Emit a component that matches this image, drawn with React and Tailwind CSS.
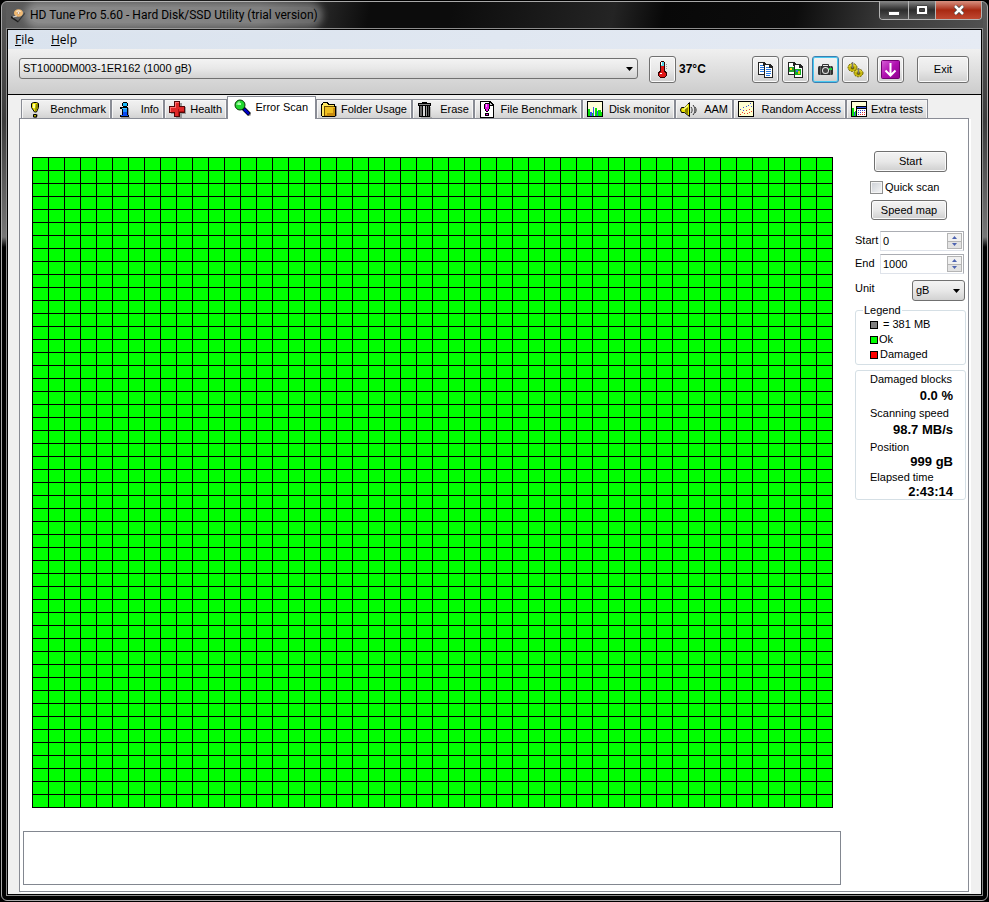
import { useState } from 'react';
import clsx from 'clsx';

const BenchmarkIcon = () => (
    <svg viewBox="1 0 17 17" className="w-[17px] h-[17px] shrink-0" aria-hidden="true">
        <path d="M8 17h4v-1l1-1v-1l-1-1v2z" fill="#888" />
        <path d="M6.500 2.500 8.500 1.500h3l2 1v4l-2 4.500h-2l-3-4.500z" fill="#e8e000" stroke="#000" />
        <path d="M8 3h2v4H8z" fill="#ffffa0" />
        <path d="M11 3h2v4l-2 3h-1z" fill="#908c00" />
        <path d="M8.500 13.500h3v2.500h-3z" fill="#b8b000" stroke="#000" />
    </svg>
);

const InfoIcon = () => (
    <svg viewBox="1 0 17 17" className="w-[17px] h-[17px] shrink-0" shapeRendering="crispEdges" aria-hidden="true">
        <path d="M6 16h9v1H6zM13 7h1v8h-1z" fill="#999" />
        <path d="M8 1h4v1h1v3h-1v1H8V5H7V2h1zM5 6h8v8h1v2H5v-2h2V8H5z" fill="#000" />
        <path d="M8 2h4v3H8z" fill="#18b8f8" />
        <path d="M6 7h6v1H8z" fill="#40c0ff" />
        <path d="M8 8h4v3H8z" fill="#1890ff" />
        <path d="M8 11h4v3h1v1H6v-1h2z" fill="#0848f0" />
    </svg>
);

const HealthIcon = () => (
    <svg viewBox="1 1 17 17" className="w-[17px] h-[17px] shrink-0" shapeRendering="crispEdges" aria-hidden="true">
        <path d="M8 3h6v4h4v7h-4v4H8v-4H3V8h5z" fill="#999" />
        <path d="M6 1h6v5h5v7h-5v4H6v-4H1V6h5z" fill="#500808" />
        <path d="M7 2h4v5h5v5h-5v4H7v-4H2V7h5z" fill="#e02828" />
        <path d="M7 2h4v1H8v5H3v4H2V7h5z" fill="#ff7070" />
        <path d="M10 9v7h1v-4h5v-1h-5V9z" fill="#b01010" />
    </svg>
);

const ScanIcon = () => (
    <svg viewBox="0 0 17 17" className="w-[17px] h-[17px] shrink-0" aria-hidden="true">
        <path d="m10.500 10.500 6 6" stroke="#aaa" strokeWidth="3" />
        <path d="m9 9 6.500 6.500" stroke="#000" strokeWidth="4" />
        <path d="m10 10 5 5" stroke="#0000c8" strokeWidth="2.500" />
        <circle cx="6" cy="6" r="5" fill="#20d830" stroke="#063806" />
        <path d="M3 6c0-2 1-3 3-3" fill="none" stroke="#b8ffb8" />
        <path d="M4 4h3v2H4z" fill="#a8ffa8" />
    </svg>
);

const FolderIcon = () => (
    <svg viewBox="1 1 17 17" className="w-[17px] h-[17px] shrink-0" shapeRendering="crispEdges" aria-hidden="true">
        <path d="M4 17h12v-1h1V6h-1v10H4z" fill="#888" />
        <path d="M3 2h5v1h1v1h6v2h1v10h-1v1H2v-1H1V4h1V3h1z" fill="#000" />
        <path d="M3 3h4v1h1v1h6v1H4v10H2V5h1z" fill="#ffe860" />
        <path d="M5 7h10v8H5z" fill="#f0c020" />
        <path d="M7 13h6V8h2v8H5v-1h2z" fill="#c88c10" />
        <path d="M5 6h9v1H5v9H4V6z" fill="#705000" />
    </svg>
);

const TrashIcon = () => (
    <svg viewBox="1 0 17 17" className="w-[17px] h-[17px] shrink-0" shapeRendering="crispEdges" aria-hidden="true">
        <path d="M14 6h1v10h1v1H5v-1h9z" fill="#aaa" />
        <path d="M6 1h5v1h4v3h-1v11H3V5H2V2h4z" fill="#000" />
        <path d="M3 3h11v1H3z" fill="#888" />
        <path d="M4 5h2v10H4z" fill="#666" />
        <path d="M7 5h2v10H7z" fill="#d8d8d8" />
        <path d="M10 5h1v10h-1z" fill="#999" />
        <path d="M12 5h1v10h-1z" fill="#555" />
    </svg>
);

const FileBenchmarkIcon = () => (
    <svg viewBox="1 1 17 17" className="w-[17px] h-[17px] shrink-0" shapeRendering="crispEdges" aria-hidden="true">
        <path d="M2 1h10l4 4v13H2z" fill="#000" />
        <path d="M3 2h8v4h4v11H3z" fill="#fff" />
        <path d="M12 3v2h2z" fill="#ccc" />
        <path d="M7 3h4v1h1v5h-1v2h-1v1H8v-1H7V9H6V4h1z" fill="#000" />
        <path d="M7 4h4v5h-1v2H8V9H7z" fill="#e010e0" />
        <path d="M8 4h1v3H8z" fill="#ffa0ff" />
        <path d="M7 13h4v3H7z" fill="#000" />
        <path d="M8 14h2v1H8z" fill="#e010e0" />
    </svg>
);

const MonitorIcon = () => (
    <svg viewBox="1 1 17 17" className="w-[17px] h-[17px] shrink-0" shapeRendering="crispEdges" aria-hidden="true">
        <path d="M1 1h16v16H1z" fill="#000" />
        <path d="M2 2h14v14H2z" fill="#ffffd8" />
        <path d="M2 9h2v3h2v1h1v3H2zM9 8h2v8H9zM12 10h3v2h1v4h-4z" fill="#08e008" />
        <path d="M4 12h2v4H4zM7 7h1v9H7zM11 11h1v5h-1z" fill="#3858f0" />
    </svg>
);

const SpeakerIcon = () => (
    <svg viewBox="1 0 17 17" className="w-[17px] h-[17px] shrink-0" aria-hidden="true">
        <path d="M2.500 6.500h3l5-5v14l-5-4h-3L1.500 9z" fill="#e8e000" stroke="#000" />
        <path d="M6 7h1V5l2-1v10l-3-3z" fill="#888400" />
        <path d="M3 8h2V7l4-4v3L5 9z" fill="#ffff70" />
        <path d="M12 6c1.500 2 1.500 4 0 6M14 4c2.500 3 2.500 7 0 10M16 6c1.500 2 1.500 4 0 6" fill="none" stroke="#333" />
    </svg>
);

const RandomIcon = () => (
    <svg viewBox="1 1 17 17" className="w-[17px] h-[17px] shrink-0" shapeRendering="crispEdges" aria-hidden="true">
        <path d="M1 1h16v16H1z" fill="#000" />
        <path d="M2 2h14v14H2z" fill="#ffffd0" />
        <path d="M3 9h1v1H3zM6 7h1v1H6zM6 10h1v1H6zM9 6h1v1H9zM11 5h1v1h-1zM13 3h1v1h-1zM14 6h1v1h-1z" fill="#4050e0" />
        <path d="M3 14h1v1H3zM5 12h1v1H5zM7 13h1v1H7zM9 10h1v1H9zM10 13h1v1h-1zM12 9h1v1h-1zM12 12h1v1h-1zM14 11h1v1h-1z" fill="#f04030" />
    </svg>
);

const ExtraIcon = () => (
    <svg viewBox="1 1 17 17" className="w-[17px] h-[17px] shrink-0" shapeRendering="crispEdges" aria-hidden="true">
        <path d="M1 1h16v16H1z" fill="#000" />
        <path d="M2 2h14v4H2zM2 6h4v10H2z" fill="#ffffd8" />
        <path d="M2 8h2v8H2zM5 11h1v5H5z" fill="#08e008" />
        <path d="M4 12h1v4H4z" fill="#3858f0" />
        <path d="M7 7h9v1H7z" fill="#3858f0" />
        <path d="M7 9h9v7H7z" fill="#fff" />
        <path d="M8 10h1v1H8zM10 10h1v1h-1zM12 10h1v1h-1zM14 10h1v1h-1zM8 12h1v1H8zM10 12h1v1h-1zM8 14h1v1H8z" fill="#3848d0" />
        <path d="M12 12h1v1h-1zM14 12h1v1h-1zM10 14h1v1h-1zM12 14h1v1h-1zM14 14h1v1h-1z" fill="#e03030" />
    </svg>
);

const DiskLogo = () => (
    <svg viewBox="0 0 16 16" className="w-4 h-4 shrink-0" aria-hidden="true">
        <path d="M1 9 8 1l7 4-7 9z" fill="#606060" />
        <path d="m1 9 7 5v1.500L1 11z" fill="#1c1c1c" />
        <path d="m8 14 7-9v2l-7 8.500z" fill="#2e2e2e" />
        <ellipse cx="8.500" cy="6" rx="4.500" ry="3.800" fill="#f0b870" />
        <path d="M6 4.500c1-1.500 4-2 5 0L8.500 6z" fill="#ffe9c8" />
        <circle cx="8.500" cy="6" r="1.200" fill="#fff" stroke="#a07040" strokeWidth=".5" />
        <path d="m3 10 4-1" stroke="#ddd" />
    </svg>
);

const ThermometerIcon = () => (
    <svg viewBox="0 0 17 17" className="w-[17px] h-[17px]" shapeRendering="crispEdges" aria-hidden="true">
        <path d="M7 0h3v1h1v9h1v1h1v4h-1v1h-1v1H6v-1H5v-1H4v-4h1v-1h1V1h1z" fill="#300" />
        <path d="M7 1h3v4H7z" fill="#50d8e8" />
        <path d="M7 5h3v6h1v1h1v3h-1v1H6v-1H5v-3h1v-1h1z" fill="#e01818" />
        <path d="M7 1h1v3H7zM6 12h2v1H6z" fill="#fff" />
        <path d="M12 3h1v1h-1zM12 5h1v1h-1zM12 7h1v1h-1z" fill="#999" />
    </svg>
);

const CopyIcon = ({ image }) => (
    <svg viewBox="0 0 17 17" className="w-[17px] h-[17px]" shapeRendering="crispEdges" aria-hidden="true">
        <path d="M1 1h6l3 3v10H1z" fill="#222" />
        <path d="M2 2h4v3h3v8H2z" fill="#fff" />
        {image ? <path d="M2 6h5v5H2z" fill="#28a030" /> : <path d="M3 4h3v1H3zM3 6h4v1H3zM3 8h4v1H3zM3 10h4v1H3z" fill="#2878e0" />}
        {image && <path d="M3 7h2v2H3z" fill="#ffe020" />}
        <path d="M7 3h6l3 3v11H7z" fill="#222" />
        <path d="M8 4h4v3h3v9H8z" fill="#fff" />
        {image ? <path d="M8 8h6v6H8z" fill="#10b020" /> : <path d="M9 6h3v1H9zM9 8h5v1H9zM9 10h5v1H9zM9 12h5v1H9zM9 14h4v1H9z" fill="#2878e0" />}
        {image && <path d="M9 9h2v2H9z" fill="#3868f0" />}
        {image && <path d="M11 10h2v3h-2z" fill="#e8c010" />}
    </svg>
);

const CameraIcon = () => (
    <svg viewBox="0 0 17 17" className="w-[17px] h-[17px]" aria-hidden="true">
        <path d="M5.500 5V3.500h6V5" fill="none" stroke="#333" />
        <rect x="1" y="5" width="15" height="9" rx="1.500" fill="#303030" />
        <path d="M3.500 5v9M13.500 5v9" stroke="#666" />
        <circle cx="8.500" cy="9.500" r="3.500" fill="#e4e4e4" />
        <circle cx="8.500" cy="9.500" r="2.500" fill="#444" />
        <path d="M12 7h3v2h-3z" fill="#18d838" />
    </svg>
);

const GearsIcon = () => (
    <svg viewBox="0 0 17 17" className="w-[17px] h-[17px]" aria-hidden="true">
        <ellipse cx="5.500" cy="6.500" rx="4.500" ry="4" fill="#c8b810" stroke="#6e6400" strokeDasharray="2 1" />
        <ellipse cx="11.500" cy="12" rx="4.500" ry="3.800" fill="#c8b810" stroke="#6e6400" strokeDasharray="2 1" />
        <path d="M2.500 5.500c1-2 4-2.500 6-.5M8.500 11c1-2 4-2.500 6-.5" fill="none" stroke="#f0e850" />
        <ellipse cx="5.500" cy="7" rx="1.800" ry="1.400" fill="#6e6400" />
        <ellipse cx="11.500" cy="12.500" rx="1.800" ry="1.400" fill="#6e6400" />
        <path d="M5.500 1v6M11.500 7v5.500" stroke="#777" strokeWidth="1.500" />
    </svg>
);

const DownloadIcon = () => (
    <svg viewBox="0 0 19 19" className="w-[19px] h-[19px]" aria-hidden="true">
        <defs>
            <linearGradient id="purple" x1="0" y1="0" x2="1" y2="1">
                <stop offset="0" stopColor="#d860d8" />
                <stop offset=".5" stopColor="#b010b0" />
                <stop offset="1" stopColor="#900090" />
            </linearGradient>
        </defs>
        <rect x=".5" y=".5" width="18" height="18" rx="1" fill="url(#purple)" stroke="#700070" />
        <path d="M9.500 3v12M4.500 10.500l5 5 5-5" fill="none" stroke="#fff" strokeWidth="2" />
    </svg>
);

const TABS = [
    { id: 'benchmark', label: 'Benchmark', icon: BenchmarkIcon, width: 'w-[90px]' },
    { id: 'info', label: 'Info', icon: InfoIcon, width: 'w-[53px]' },
    { id: 'health', label: 'Health', icon: HealthIcon, width: 'w-[63px]' },
    { id: 'scan', label: 'Error Scan', icon: ScanIcon, width: 'w-[89px]' },
    { id: 'folder', label: 'Folder Usage', icon: FolderIcon, width: 'w-[96px]' },
    { id: 'erase', label: 'Erase', icon: TrashIcon, width: 'w-[62px]' },
    { id: 'file', label: 'File Benchmark', icon: FileBenchmarkIcon, width: 'w-[108px]' },
    { id: 'monitor', label: 'Disk monitor', icon: MonitorIcon, width: 'w-[93px]' },
    { id: 'aam', label: 'AAM', icon: SpeakerIcon, width: 'w-[58px]' },
    { id: 'random', label: 'Random Access', icon: RandomIcon, width: 'w-[113px]' },
    { id: 'extra', label: 'Extra tests', icon: ExtraIcon, width: 'w-[82px]' },
];

const BLOCKS = Array.from({ length: 50 * 50 }, (_, i) => i);

const LEGEND = [
    { label: '= 381 MB', color: 'bg-[#808080]', gap: 'gap-[5px]' },
    { label: 'Ok', color: 'bg-[#00ff00]', gap: 'gap-px' },
    { label: 'Damaged', color: 'bg-[#ff0000]', gap: 'gap-[2px]' },
];

const STATS = [
    { label: 'Damaged blocks', value: '0.0 %', leading: 'leading-[18px]' },
    { label: 'Scanning speed', value: '98.7 MB/s', leading: 'leading-[18px]' },
    { label: 'Position', value: '999 gB', leading: 'leading-[14px]' },
    { label: 'Elapsed time', value: '2:43:14', leading: 'leading-[14px]' },
];

const buttonStyle = 'flex items-center justify-center rounded-[3px] border bg-linear-to-b from-[#f3f3f3] via-[#e8e8e8] to-[#cfcfcf]';
const buttonNormal = 'border-[#707070] shadow-[inset_0_0_0_1px_#fafafa]';
const buttonFocused = 'border-[#3c7fb1] shadow-[inset_0_0_0_1px_#48c8f0]';

const ToolButton = ({ label, focused, className, children }) => (
    <button
        aria-label={label}
        className={clsx(buttonStyle, focused ? buttonFocused : buttonNormal, 'w-[27px] h-[27px] shrink-0', className)}
    >
        {children}
    </button>
);

const Select = ({ label, options, className }) => (
    <div className={clsx('relative', className)}>
        <select
            aria-label={label}
            className="appearance-none w-full h-[21px] pl-[3px] pr-4 rounded-[3px] border border-[#707070] bg-linear-to-b from-[#f3f3f3] via-[#e8e8e8] to-[#d2d2d2] text-black"
        >
            {options.map(option => <option key={option}>{option}</option>)}
        </select>
        <svg viewBox="0 0 7 4" className="absolute right-[5px] top-[9px] w-[7px] h-1 pointer-events-none" aria-hidden="true">
            <path d="M0 0h7L3.500 4z" fill="#000" />
        </svg>
    </div>
);

const SpinInput = ({ id, label, initial }) => {
    const [value, setValue] = useState(initial);

    return (
        <div className="flex">
            <label htmlFor={id} className="w-[25px] shrink-0 pt-[2px] leading-[14px]">{label}</label>
            <div className="flex flex-1 min-w-0 h-5 mr-0.5 border border-[#dfe3ea] border-t-[#abadb3] border-r-[#abadb3] bg-white">
                <input
                    id={id}
                    value={value}
                    onChange={e => setValue(Number(e.target.value) || 0)}
                    className="flex-1 min-w-0 pl-[2px] outline-none"
                />
                <div className="flex flex-col w-[17px] shrink-0 p-px">
                    <button aria-label={`Increase ${label}`} onClick={() => setValue(value + 1)} className="flex-1 flex items-center justify-center border border-[#b4b4b4] bg-[#f0f0f0]">
                        <svg viewBox="0 0 5 3" className="w-[5px] h-[3px]" aria-hidden="true"><path d="M0 3h5L2.500 0z" fill="#4d63b0" /></svg>
                    </button>
                    <button aria-label={`Decrease ${label}`} onClick={() => setValue(value - 1)} className="flex-1 flex items-center justify-center border border-t-0 border-[#b4b4b4] bg-[#e2e2e2]">
                        <svg viewBox="0 0 5 3" className="w-[5px] h-[3px]" aria-hidden="true"><path d="M0 0h5L2.500 3z" fill="#4d63b0" /></svg>
                    </button>
                </div>
            </div>
        </div>
    );
};

const TitleBar = () => (
    <header className="relative flex h-[26px] items-center pl-[4px] bg-[linear-gradient(100deg,#5c5c5c_0px,#4a4a4a_250px,#0c0c0c_360px,#0c0c0c_440px,#242424_600px,#080808_650px,#0c0c0c_780px,#3a3a3a_870px,#555_985px)]">
        <div className="flex items-center gap-[4px]">
            <DiskLogo />
            <h1 className="rounded-full bg-white/30 font-[Roboto,sans-serif] text-[12px] leading-4 text-black shadow-[0_0_7px_5px_rgba(255,255,255,0.3)]">
                HD Tune Pro 5.60 - Hard Disk/SSD Utility (trial version)
            </h1>
        </div>
        <div className="absolute right-px -top-px flex h-[19px] overflow-hidden rounded-b-[4px] border border-t-0 border-[#b4b4b4]">
            <button aria-label="Minimize" className="flex w-7 items-center justify-center bg-linear-to-b from-[#8a8a8a] via-[#2c2c2c] to-[#555]">
                <svg viewBox="0 0 12 5" className="w-3 h-[5px] mt-1.5" aria-hidden="true"><rect x=".5" y=".5" width="11" height="4" fill="#fff" stroke="#444" /></svg>
            </button>
            <button aria-label="Maximize" className="flex w-[27px] items-center justify-center border-l border-[#b4b4b4] bg-linear-to-b from-[#8a8a8a] via-[#2c2c2c] to-[#555]">
                <svg viewBox="0 0 12 10" className="w-3 h-2.5" aria-hidden="true">
                    <path d="M.5.5h11v9H.5z" fill="#fff" stroke="#444" />
                    <path d="M3.500 3.500h5v3h-5z" fill="#444" stroke="#333" />
                </svg>
            </button>
            <button aria-label="Close" className="flex w-[46px] items-center justify-center border-l border-[#b4b4b4] bg-linear-to-b from-[#d89080] via-[#a82810] to-[#c04830]">
                <svg viewBox="0 0 12 10" className="w-3 h-2.5" aria-hidden="true">
                    <path d="m2 1 8 8M10 1 2 9" stroke="#444" strokeWidth="4" />
                    <path d="m2 1 8 8M10 1 2 9" stroke="#fff" strokeWidth="2.500" />
                </svg>
            </button>
        </div>
    </header>
);

const Toolbar = () => (
    <div className="flex h-[46px] items-start border-b border-black bg-linear-to-b from-[#f0f0f0] to-[#cccccc] pl-[11px] pr-3 pt-[7px]">
        <Select label="Drive" options={['ST1000DM003-1ER162 (1000 gB)']} className="flex-1 mt-0.5" />
        <ToolButton label="Temperature" className="ml-[11px]"><ThermometerIcon /></ToolButton>
        <span className="w-[76px] pl-[3px] text-[12px] font-bold leading-[27px]">37°C</span>
        <div className="flex gap-[3px]">
            <ToolButton label="Copy text"><CopyIcon /></ToolButton>
            <ToolButton label="Copy screenshot"><CopyIcon image /></ToolButton>
            <ToolButton label="Save screenshot" focused><CameraIcon /></ToolButton>
            <ToolButton label="Options"><GearsIcon /></ToolButton>
        </div>
        <ToolButton label="Minimize to tray" className="ml-2"><DownloadIcon /></ToolButton>
        <button className={clsx(buttonStyle, buttonNormal, 'ml-[13px] w-[52px] h-[27px]')}>Exit</button>
    </div>
);

const TabBar = ({ active, onSelect }) => (
    <div role="tablist" className="flex h-[23px] items-end pl-0.5">
        {TABS.map(({ id, label, icon: Icon, width }) => {
            const isActive = id === active;
            return (
                <button
                    key={id}
                    role="tab"
                    aria-selected={isActive}
                    onClick={() => onSelect(id)}
                    className={clsx(
                        'flex items-center justify-between whitespace-nowrap border-t border-l border-r border-[#898c95]',
                        width,
                        isActive
                            ? 'relative z-10 h-[23px] bg-white pl-[6px] pr-[7px] pb-[2px]'
                            : 'h-5 bg-linear-to-b from-[#f2f2f2] via-[#e6e6e6] to-[#d0d0d0] pl-1 pr-1 shadow-[inset_0_0_0_1px_#f6f6f6]'
                    )}
                >
                    <Icon />
                    <span>{label}</span>
                </button>
            );
        })}
    </div>
);

const SidePanel = () => (
    <aside className="w-[111px] shrink-0 flex flex-col pt-8">
        <button className={clsx(buttonStyle, buttonNormal, 'ml-[19px] w-[73px] h-[21px]')}>Start</button>
        <label className="mt-2 ml-[15px] flex h-[14px] items-center gap-[2px]">
            <input type="checkbox" className="appearance-none w-[13px] h-[13px] border border-[#8e8f8f] bg-linear-to-br from-[#cbcfd5] to-[#f6f6f6] shadow-[inset_0_0_0_1px_#f4f4f4] checked:bg-[#4d63b0]" />
            Quick scan
        </label>
        <button className={clsx(buttonStyle, buttonNormal, 'mt-[6px] ml-4 w-[76px] h-5')}>Speed map</button>

        <div className="mt-[11px] flex flex-col gap-[3px]">
            <SpinInput id="start" label="Start" initial={0} />
            <SpinInput id="end" label="End" initial={1000} />
        </div>

        <div className="mt-[6px] flex justify-between pr-px">
            <span className="leading-4">Unit</span>
            <Select label="Unit" options={['gB', 'MB']} className="w-[53px]" />
        </div>

        <fieldset className="mt-[2px] h-[62px] rounded-[3px] border border-[#d5dfe5] pl-[14px]">
            <legend className="-ml-[7px] px-px leading-[14px]">Legend</legend>
            <ul>
                {LEGEND.map(({ label, color, gap }) => (
                    <li key={label} className={clsx('flex items-center h-[15px]', gap)}>
                        <span className={clsx('w-2 h-2 border border-black', color)} />
                        {label}
                    </li>
                ))}
            </ul>
        </fieldset>

        <dl className="mt-[5px] rounded-[3px] border border-[#d5dfe5] pl-[14px] pr-3">
            {STATS.map(({ label, value, leading }) => (
                <div key={label}>
                    <dt className="leading-4">{label}</dt>
                    <dd className={clsx('text-right text-[13px] font-bold', leading)}>{value}</dd>
                </div>
            ))}
        </dl>
    </aside>
);

export default function App() {
    const [activeTab, setActiveTab] = useState('scan');

    return (
        <div className="flex min-h-screen flex-col bg-black p-px font-['Liberation_Sans',Arial,sans-serif] text-[11px] text-black">
            <div className="flex flex-1 flex-col rounded-[6px] border border-[#a8a8a8] bg-[linear-gradient(to_bottom,#5a5a5a_0px,#3c3c3c_120px,#777_235px,#000_245px,#000_100%)] px-1 pb-1">
                <TitleBar />
                <div className="flex flex-1 flex-col border border-[#8c8c8c]">
                    <div className="flex flex-1 flex-col border border-black bg-[#f0f0f0]">
                        <nav className="flex h-[19px] items-center gap-[17px] bg-linear-to-r from-[#dae3ee] to-[#e6ebf4] pl-[7px] font-['Open_Sans',sans-serif] text-[12px]">
                            <button><u>F</u>ile</button>
                            <button><u>H</u>elp</button>
                        </nav>
                        <Toolbar />
                        <main className="flex flex-1 flex-col pl-[11px] pr-[12px] pt-px pb-[2px]">
                            <TabBar active={activeTab} onSelect={setActiveTab} />
                            <div role="tabpanel" className="-mt-px flex flex-1 border border-[#898c95] bg-white pl-[3px] pr-[2px] pb-[6px] gap-[14px] shadow-[2px_1px_0_0_#fff]">
                                <div className="flex flex-1 min-w-0 flex-col">
                                    <div className="mt-[38px] ml-[9px] mr-2 grid grid-cols-[repeat(50,minmax(0,1fr))] auto-rows-[12px] gap-px bg-black p-px">
                                        {BLOCKS.map(i => <div key={i} className="bg-[#00ff00]" />)}
                                    </div>
                                    <div className="mt-[23px] min-h-[54px] flex-1 border border-[#828790]" />
                                </div>
                                <SidePanel />
                            </div>
                        </main>
                    </div>
                </div>
            </div>
        </div>
    );
}
